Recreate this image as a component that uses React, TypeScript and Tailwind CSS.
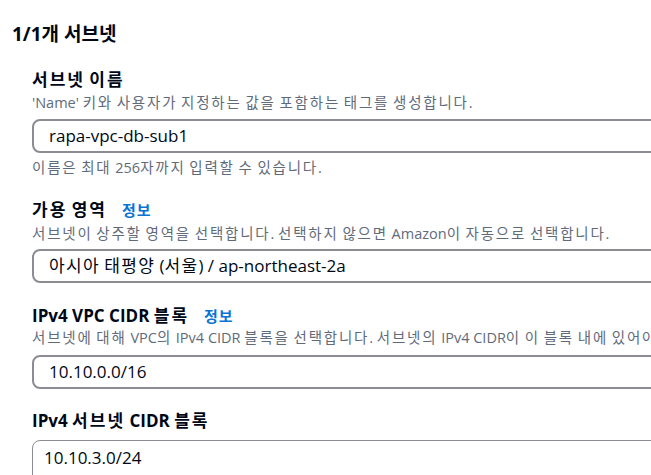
import { ReactNode } from 'react';

const font = { fontFamily: '"Open Sans", "Noto Sans CJK KR", sans-serif' };

// hangul runs get their own letter spacing, the rest stays as is
function Ko({ text, cls }: { text: string; cls: string }) {
  const parts = text.split(/([\uac00-\ud7a3]+)/);
  return (
    <span>
      {parts.map((p, i) =>
        /[\uac00-\ud7a3]/.test(p) ? (
          <span key={i} className={cls}>
            {p}
          </span>
        ) : (
          p
        )
      )}
    </span>
  );
}

function Label({ text, info }: { text: string; info?: boolean }) {
  return (
    <div className="flex items-center gap-[15px] h-[24px]">
      <span className="text-[17px] font-bold text-[#000716] leading-[24px]">
        <Ko text={text} cls="tracking-[2px]" />
      </span>
      {info && <span className="text-[15px] font-semibold text-[#0972d3] leading-[24px] tracking-[1px]">정보</span>}
    </div>
  );
}

function Desc({ text }: { text: string }) {
  return (
    <p className="text-[14.5px] text-[#5f6b7a] leading-[20px] whitespace-nowrap">
      <Ko text={text} cls="tracking-[1.8px]" />
    </p>
  );
}

function Field({ value, thin }: { value: string; thin?: boolean }) {
  return (
    <div
      className={
        thin
          ? 'w-[900px] h-[36px] border border-[#8c8c94] rounded-tl-[8px] flex items-center pl-[11px] text-[17px] text-[#000716]'
          : 'w-[900px] h-[34px] border-2 border-[#8c8c94] rounded-[8px] flex items-center pl-[15px] text-[17px] text-[#000716]'
      }
    >
      <Ko text={value} cls="tracking-[1.3px]" />
    </div>
  );
}

export default function App() {
  return (
    <div className="w-full h-[475px] overflow-hidden bg-white" style={font}>
      <div className="w-[1000px] pt-[22px] pl-[12px] flex flex-col gap-[22px]">
        <h2 className="text-[19px] font-bold text-[#000716] leading-[24px]">1/1개 서브넷</h2>

        <div className="pl-[20px] flex flex-col gap-[20px]">
          <div className="flex flex-col">
            <Label text="서브넷 이름" />
            <div className="mt-[1px] mb-[6px]">
              <Desc text="'Name' 키와 사용자가 지정하는 값을 포함하는 태그를 생성합니다." />
            </div>
            <Field value="rapa-vpc-db-sub1" />
            <div className="mt-[5px]">
              <Desc text="이름은 최대 256자까지 입력할 수 있습니다." />
            </div>
          </div>

          <div className="flex flex-col">
            <Label text="가용 영역" info />
            <div className="mt-[2px] mb-[5px]">
              <Desc text="서브넷이 상주할 영역을 선택합니다. 선택하지 않으면 Amazon이 자동으로 선택합니다." />
            </div>
            <Field value="아시아 태평양 (서울) / ap-northeast-2a" />
          </div>

          <div className="mt-[1px] flex flex-col">
            <Label text="IPv4 VPC CIDR 블록" info />
            <div className="mb-[7px]">
              <Desc text="서브넷에 대해 VPC의 IPv4 CIDR 블록을 선택합니다. 서브넷의 IPv4 CIDR이 이 블록 내에 있어야 합니다." />
            </div>
            <Field value="10.10.0.0/16" />
          </div>

          <div className="flex flex-col gap-[7px]">
            <Label text="IPv4 서브넷 CIDR 블록" />
            <Field value="10.10.3.0/24" thin />
          </div>
        </div>
      </div>
    </div>
  );
}
